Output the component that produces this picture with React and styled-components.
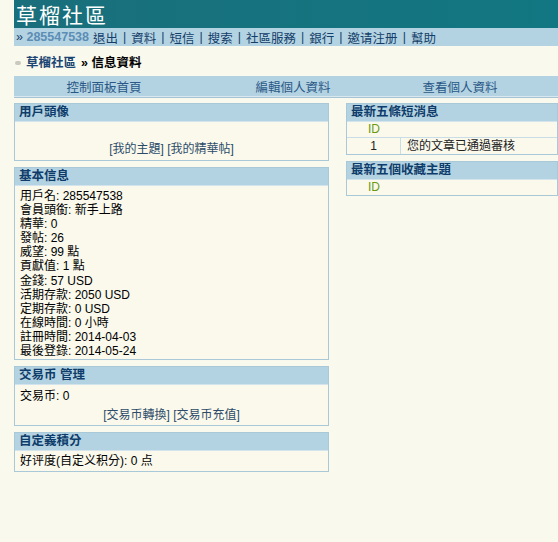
import React from 'react';
import styled, { createGlobalStyle } from 'styled-components';

const GlobalStyle = createGlobalStyle`
  body {
    margin: 0;
    background: #faf9ed;
    font-family: "Liberation Sans", "Noto Sans CJK TC", sans-serif;
    font-size: 12px;
    color: #000;
  }
`;

const Page = styled.div`
  padding-left: 14px;
  width: 544px;
`;

const Header = styled.div`
  height: 28px;
  background: linear-gradient(90deg, #196f7b, #127782);
  display: flex;
  align-items: center;
  padding-left: 2px;
`;

const Title = styled.h1`
  margin: 0;
  color: #fff;
  font-family: "Noto Sans CJK TC", sans-serif;
  font-size: 21px;
  font-weight: normal;
  letter-spacing: 2px;
  line-height: 24px;
`;

const NavBar = styled.div`
  height: 18px;
  background: #b4d3e2;
  display: flex;
  align-items: center;
  padding-left: 2px;
  font-size: 12.5px;
  color: #143f6a;
  white-space: nowrap;
`;

const User = styled.span`
  color: #5b8db5;
  font-weight: bold;
  margin-right: 4px;
`;

const Sep = styled.span`
  margin: 0 5px;
`;

const Crumbs = styled.div`
  height: 30px;
  display: flex;
  align-items: center;
  font-size: 12.5px;
  font-weight: bold;
`;

const Dot = styled.span`
  width: 6px;
  height: 4px;
  margin: 3px 5px 0 1px;
  background: #c9c9bd;
  border-radius: 2px;
`;

const CrumbLink = styled.span`
  color: #1b4673;
  margin-right: 5px;
`;

const Tabs = styled.div`
  height: 20px;
  display: grid;
  grid-template-columns: 180px 198px 136px;
  background: #b4d3e2;
  border-bottom: 1px solid #d9e7ee;
  box-shadow: 0 1px 0 #a6c4d3;
`;

const Tab = styled.div`
  display: flex;
  align-items: center;
  justify-content: center;
  color: #2a5887;
  font-size: 12.5px;
`;

const Columns = styled.div`
  display: flex;
  gap: 17px;
  margin-top: 6px;
`;

const Column = styled.div`
  width: ${(p) => p.$w};
  display: flex;
  flex-direction: column;
  gap: 6px;
`;

const Panel = styled.div`
  border: 1px solid #a9c8d8;
  background: #faf9ec;
`;

const PanelHead = styled.div`
  height: 17px;
  line-height: 17px;
  padding-left: 4px;
  background: #b4d3e2;
  border-bottom: 1px solid #d3e4ec;
  color: #0f3d6b;
  font-weight: bold;
  font-size: 12.5px;
`;

const Body = styled.div`
  padding: ${(p) => p.$pad || '2px 5px 2px'};
  line-height: 14.1px;
`;

const Centered = styled.div`
  text-align: center;
  color: #2d4b68;
  line-height: 16px;
  margin-top: ${(p) => p.$mt || '0'};
`;

const Table = styled.div`
  display: grid;
  grid-template-columns: 54px 1fr;
`;

const Cell = styled.div`
  height: ${(p) => p.$h || '15px'};
  line-height: ${(p) => p.$h || '15px'};
  text-align: ${(p) => (p.$center ? 'center' : 'left')};
  padding-left: ${(p) => (p.$center ? '0' : '6px')};
  color: ${(p) => p.$color || '#222'};
  border-top: ${(p) => (p.$top ? '1px solid #c9dde7' : 'none')};
  border-right: ${(p) => (p.$divide ? '1px solid #c9dde7' : 'none')};
`;

const info = [
  '用戶名: 285547538',
  '會員頭銜: 新手上路',
  '精華: 0',
  '發帖: 26',
  '威望: 99 點',
  '貢獻值: 1 點',
  '金錢: 57 USD',
  '活期存款: 2050 USD',
  '定期存款: 0 USD',
  '在線時間: 0 小時',
  '註冊時間: 2014-04-03',
  '最後登錄: 2014-05-24',
];

const links = ['退出', '資料', '短信', '搜索', '社區服務', '銀行', '邀请注册', '幫助'];

export default function App() {
  return (
    <Page>
      <GlobalStyle />
      <Header>
        <Title>草榴社區</Title>
      </Header>
      <NavBar>
        <span>»&nbsp;</span>
        <User>285547538</User>
        {links.map((l, i) => (
          <React.Fragment key={l}>
            {i > 0 && <Sep>|</Sep>}
            <span>{l}</span>
          </React.Fragment>
        ))}
      </NavBar>
      <Crumbs>
        <Dot />
        <CrumbLink>草榴社區</CrumbLink>
        <span>» 信息資料</span>
      </Crumbs>
      <Tabs>
        <Tab>控制面板首頁</Tab>
        <Tab>編輯個人資料</Tab>
        <Tab>查看個人資料</Tab>
      </Tabs>
      <Columns>
        <Column $w="315px">
          <Panel>
            <PanelHead>用戶頭像</PanelHead>
            <Body $pad="19px 5px 3px">
              <Centered>[我的主題] [我的精華帖]</Centered>
            </Body>
          </Panel>
          <Panel>
            <PanelHead>基本信息</PanelHead>
            <Body $pad="3px 5px 1px">
              {info.map((line) => (
                <div key={line}>{line}</div>
              ))}
            </Body>
          </Panel>
          <Panel>
            <PanelHead>交易币 管理</PanelHead>
            <Body $pad="4px 5px 2px">
              <div>交易币: 0</div>
              <Centered $mt="4px">[交易币轉換] [交易币充值]</Centered>
            </Body>
          </Panel>
          <Panel>
            <PanelHead>自定義積分</PanelHead>
            <Body $pad="3px 5px 3px">
              <div>好评度(自定义积分): 0 点</div>
            </Body>
          </Panel>
        </Column>
        <Column $w="212px">
          <Panel>
            <PanelHead>最新五條短消息</PanelHead>
            <Table>
              <Cell $center $color="#6a9a12">ID</Cell>
              <Cell />
              <Cell $center $top $divide $h="16px">1</Cell>
              <Cell $top $h="16px">您的文章已通過審核</Cell>
            </Table>
          </Panel>
          <Panel>
            <PanelHead>最新五個收藏主題</PanelHead>
            <Table>
              <Cell $center $color="#6a9a12">ID</Cell>
              <Cell />
            </Table>
          </Panel>
        </Column>
      </Columns>
    </Page>
  );
}
